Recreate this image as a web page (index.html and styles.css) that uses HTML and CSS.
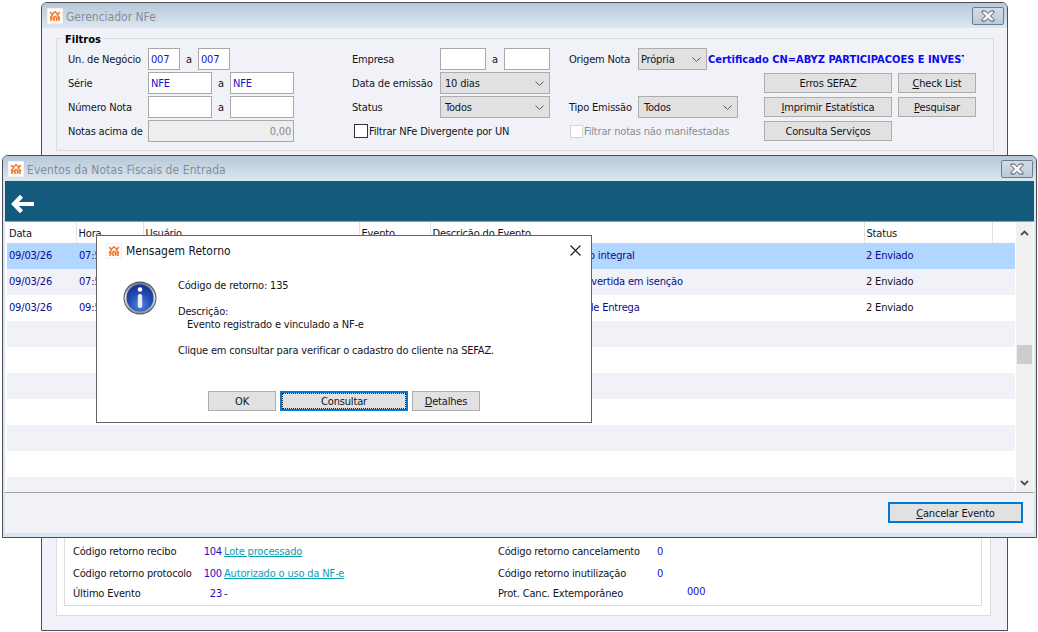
FILE: index.html
```html
<!DOCTYPE html>
<html lang="pt-BR">
<head>
<meta charset="utf-8">
<title>Gerenciador NFe</title>
<link rel="stylesheet" href="styles.css">
</head>
<body>
<svg class="defs" width="0" height="0" aria-hidden="true">
  <symbol id="logo" viewBox="0 0 16 16">
    <rect width="16" height="16" fill="#fff" stroke="#e4e4e4"/>
    <g fill="none" stroke="#f47a2c" stroke-width="1.6">
      <path d="M3 4l2.500 2.500M8 3.500L5 7M8 3.500l3.500 3.500M13 4l-3 3M3 10l2.500-3M13 10l-3-3M8 8l-3 3M8 8l3 3"/>
      <path d="M4 9v4M7 10v3M9.500 10v3M12 9v4"/>
    </g>
  </symbol>
  <symbol id="closex" viewBox="0 0 16 12">
    <path d="M2 1h3.500L8 3.600 10.500 1H14v1.500L10.600 6 14 9.500V11h-3.500L8 8.400 5.500 11H2V9.500L5.400 6 2 2.500z" fill="#f4f6f8" stroke="#50565e" stroke-width="1"/>
  </symbol>
  <symbol id="chev" viewBox="0 0 9 5">
    <path d="M.5.500l4 4 4-4" fill="none" stroke="#5a5a5a" stroke-width="1"/>
  </symbol>
</svg>

<main class="desktop">

  <section class="window win-back">
    <header class="titlebar">
      <svg class="logo"><use href="#logo"/></svg>
      <span class="title-text">Gerenciador NFe</span>
      <button class="win-close" type="button" aria-label="Fechar"><svg class="closex"><use href="#closex"/></svg></button>
    </header>
    <div class="win-body">
      <fieldset class="filtros">
        <legend class="legend">Filtros</legend>
        <div class="fcol fcol-1">
          <div class="frow"><label class="lab lab-80">Un. de Negócio</label><span class="inp w32 blue">007</span><span class="a a18">a</span><span class="inp w32 blue">007</span></div>
          <div class="frow"><label class="lab lab-80">Série</label><span class="inp w64 blue">NFE</span><span class="a a18">a</span><span class="inp w64 blue">NFE</span></div>
          <div class="frow"><label class="lab lab-80">Número Nota</label><span class="inp w64"></span><span class="a a18">a</span><span class="inp w64"></span></div>
          <div class="frow"><label class="lab lab-80">Notas acima de</label><span class="inp w146 dis">0,00</span></div>
        </div>
        <div class="fcol fcol-2">
          <div class="frow"><label class="lab lab-88">Empresa</label><span class="inp w46"></span><span class="a a18">a</span><span class="inp w46"></span></div>
          <div class="frow"><label class="lab lab-88">Data de emissão</label><span class="sel w110">10 dias<svg class="chev"><use href="#chev"/></svg></span></div>
          <div class="frow"><label class="lab lab-88">Status</label><span class="sel w110">Todos<svg class="chev"><use href="#chev"/></svg></span></div>
          <div class="frow chk-row"><span class="chk"></span><span class="chk-text">Filtrar NFe Divergente por UN</span></div>
        </div>
        <div class="fcol fcol-3">
          <div class="frow"><label class="lab lab-69">Origem Nota</label><span class="sel w69">Própria<svg class="chev"><use href="#chev"/></svg></span><span class="cert">Certificado CN=ABYZ PARTICIPACOES E INVESTIMENTOS</span></div>
          <div class="frow"><span class="spacer-195"></span><button class="btn w128" type="button">Erros SEFAZ</button><button class="btn w78" type="button"><u>C</u>heck List</button></div>
          <div class="frow"><label class="lab lab-69">Tipo Emissão</label><span class="sel w100">Todos<svg class="chev"><use href="#chev"/></svg></span><span class="spacer-26"></span><button class="btn w128" type="button"><u>I</u>mprimir Estatística</button><button class="btn w78" type="button"><u>P</u>esquisar</button></div>
          <div class="frow"><span class="chk chk-dis"></span><span class="chk-text txt-dis w182">Filtrar notas não manifestadas</span><button class="btn w128" type="button">Consulta Serviços</button></div>
        </div>
      </fieldset>

      <div class="outer-panel">
        <div class="inner-panel">
          <div class="strow h22"><span class="st-lab">Código retorno recibo</span><span class="st-val">104</span><a class="st-link">Lote processado</a><span class="st-lab2">Código retorno cancelamento</span><span class="st-val2">0</span></div>
          <div class="strow h22"><span class="st-lab">Código retorno protocolo</span><span class="st-val">100</span><a class="st-link">Autorizado o uso da NF-e</a><span class="st-lab2">Código retorno inutilização</span><span class="st-val2">0</span></div>
          <div class="strow h18"><span class="st-lab">Último Evento</span><span class="st-val">23</span><span class="st-link st-plain">-</span><span class="st-lab2">Prot. Canc. Extemporâneo</span><span class="st-val3">000</span></div>
        </div>
      </div>
    </div>
  </section>

  <section class="window win-front">
    <header class="titlebar">
      <svg class="logo"><use href="#logo"/></svg>
      <span class="title-text title-wide">Eventos da Notas Fiscais de Entrada</span>
      <button class="win-close" type="button" aria-label="Fechar"><svg class="closex"><use href="#closex"/></svg></button>
    </header>
    <div class="toolbar">
      <svg class="arrow" viewBox="0 0 23 18"><path d="M10.500 1.200L3 9l7.500 7.800M3 9h20" fill="none" stroke="#fff" stroke-width="4.200"/></svg>
    </div>
    <div class="grid-frame">
      <div class="grid-main">
        <table class="grid">
          <colgroup><col class="c1"><col class="c2"><col class="c3"><col class="c4"><col class="c5"><col class="c6"><col class="c7"></colgroup>
          <thead>
            <tr><th>Data</th><th>Hora</th><th>Usuário</th><th>Evento</th><th>Descrição do Evento</th><th>Status</th><th></th></tr>
          </thead>
          <tbody>
            <tr class="selected"><td>09/03/26</td><td class="p3">07:55:12</td><td>USUARIO</td><td>112110</td><td>Informação de efetivo pagamento integral</td><td class="st">2 Enviado</td><td></td></tr>
            <tr class="alt"><td>09/03/26</td><td class="p3">07:58:40</td><td>USUARIO</td><td>112130</td><td>Importação em ALC/ZFM não convertida em isenção</td><td class="st">2 Enviado</td><td></td></tr>
            <tr><td>09/03/26</td><td class="p3">09:52:03</td><td>USUARIO</td><td>110130</td><td>Cancelamento do Comprovante de Entrega</td><td class="st">2 Enviado</td><td></td></tr>
            <tr class="alt"><td colspan="7"></td></tr>
            <tr><td colspan="7"></td></tr>
            <tr class="alt"><td colspan="7"></td></tr>
            <tr><td colspan="7"></td></tr>
            <tr class="alt"><td colspan="7"></td></tr>
            <tr><td colspan="7"></td></tr>
            <tr class="alt"><td colspan="7"></td></tr>
          </tbody>
        </table>
      </div>
      <div class="scrollbar">
        <svg class="sb-arrow" viewBox="0 0 9 6"><path d="M1 5l3.500-3.500L8 5" fill="none" stroke="#505050" stroke-width="1.800"/></svg>
        <div class="sb-thumb"></div>
        <svg class="sb-arrow" viewBox="0 0 9 6"><path d="M1 1l3.500 3.500L8 1" fill="none" stroke="#505050" stroke-width="1.800"/></svg>
      </div>
    </div>
    <footer class="win-foot">
      <button class="btn btn-default" type="button"><u>C</u>ancelar Evento</button>
    </footer>
  </section>

  <section class="dialog">
    <header class="dlg-title">
      <svg class="logo"><use href="#logo"/></svg>
      <span class="dlg-title-text">Mensagem Retorno</span>
      <svg class="dlg-x" viewBox="0 0 11 11"><path d="M.5.500l10 10M10.500.500l-10 10" stroke="#1a1a1a" stroke-width="1.100" fill="none"/></svg>
    </header>
    <div class="dlg-body">
      <svg class="info" viewBox="0 0 34 34">
        <defs>
          <radialGradient id="ig" cx="50%" cy="75%" r="75%"><stop offset="0" stop-color="#4f86e0"/><stop offset="0.6" stop-color="#2148ae"/><stop offset="1" stop-color="#16318a"/></radialGradient>
          <linearGradient id="ir" x1="0" y1="0" x2="0" y2="1"><stop offset="0" stop-color="#6e7686"/><stop offset="0.5" stop-color="#dfe3ea"/><stop offset="1" stop-color="#8b92a0"/></linearGradient>
        </defs>
        <circle cx="17" cy="17" r="16.500" fill="#4a5060"/>
        <circle cx="17" cy="17" r="15.500" fill="url(#ir)"/>
        <circle cx="17" cy="17" r="13.500" fill="url(#ig)"/>
        <circle cx="17" cy="8.500" r="2.300" fill="#fff"/>
        <rect x="14.800" y="13" width="4.400" height="14" rx="2" fill="#e8ecf2"/>
      </svg>
      <div class="dlg-msg">
        <p class="m1">Código de retorno: 135</p>
        <p class="m2">Descrição:</p>
        <p class="m3">Evento registrado e vinculado a NF-e</p>
        <p class="m4">Clique em consultar para verificar o cadastro do cliente na SEFAZ.</p>
      </div>
    </div>
    <div class="dlg-btns">
      <button class="btn w68" type="button">OK</button>
      <button class="btn btn-focus" type="button"><span class="focus-in">Consultar</span></button>
      <button class="btn w68" type="button"><u>D</u>etalhes</button>
    </div>
  </section>

</main>
</body>
</html>
```

FILE: styles.css
```css
* { box-sizing: border-box; }
html, body { margin: 0; padding: 0; background: #fff; }
body {
  font-family: "DejaVu Sans Condensed", "DejaVu Sans", sans-serif;
  font-stretch: condensed;
  font-size: 11px;
  letter-spacing: -0.18px;
  color: #14141e;
  width: 1038px;
  height: 632px;
  overflow: hidden;
}
.defs { position: absolute; }
.desktop { position: relative; width: 1038px; height: 632px; overflow: hidden; }

/* Windows on the desktop */
.window {
  position: absolute;
  display: flex;
  flex-direction: column;
  border: 1px solid #4c5056;
  border-radius: 6px 6px 0 0;
  background: #f0f2f8;
}
.win-back { left: 41px; top: 2px; width: 967px; height: 629px; }
.win-front { left: 2px; top: 155px; width: 1035px; height: 383px; padding: 0 2px 2px; background: #d9e4ee; }

.titlebar {
  flex: none;
  height: 25px;
  display: flex;
  align-items: center;
  padding: 0 3px 0 5px;
  background: linear-gradient(#b8c8d8, #dbe7f2);
  border-radius: 5px 5px 0 0;
}
.win-front .titlebar { margin: 0 -2px; }
.logo { width: 16px; height: 16px; flex: none; }
.title-text { margin-left: 3px; padding-top: 2px; color: #878d94; font-size: 12px; letter-spacing: 0; flex: 1; }
.title-wide { letter-spacing: 0.08px; }
.win-close {
  width: 32px;
  height: 18px;
  padding: 0;
  display: flex;
  align-items: center;
  justify-content: center;
  background: linear-gradient(#d3dde8, #bccad8);
  border: 1px solid #6d7e90;
  border-radius: 2px;
}
.closex { width: 16px; height: 12px; }

.win-body { flex: 1; display: flex; flex-direction: column; padding: 10px 13px 14px 14px; min-height: 0; }

/* Filters group */
.filtros {
  margin: 0;
  flex: none;
  height: 113px;
  min-width: 0;
  padding: 0;
  border: 1px solid #dadde2;
  background: #f0f2f8;
  position: relative;
  display: flex;
}
.legend {
  position: absolute;
  left: 5px;
  top: -6px;
  padding: 0 3px 0 3px;
  background: #f0f2f8;
  font-weight: 700;
  font-size: 11px;
  letter-spacing: 0;
  line-height: 14px;
  color: #000;
}
.fcol { display: flex; flex-direction: column; gap: 2px; padding-top: 9px; }
.fcol-1 { margin-left: 11px; width: 284px; }
.fcol-2 { width: 217px; }
.fcol-3 { flex: 1; }
.frow { display: flex; align-items: center; height: 22px; }

.lab { flex: none; white-space: nowrap; }
.lab-80 { width: 80px; }
.lab-88 { width: 88px; }
.lab-69 { width: 69px; }
.a { flex: none; text-align: center; }
.a18 { width: 18px; }

.inp {
  flex: none;
  height: 22px;
  line-height: 22px;
  padding: 0 2px;
  background: #fff;
  border: 1px solid #a9a9a9;
}
.blue { color: #1a10c8; }
.dis { background: #eeeeee; color: #8a8a8a; text-align: right; padding-right: 2px; }
.w32 { width: 32px; }
.w46 { width: 46px; }
.w64 { width: 64px; }
.w146 { width: 146px; }

.sel {
  flex: none;
  height: 22px;
  display: flex;
  align-items: center;
  justify-content: space-between;
  padding: 0 5px 0 4px;
  background: #e1e1e1;
  border: 1px solid #adadad;
}
.w110 { width: 110px; }
.w100 { width: 100px; padding-left: 5px; }
.w69 { width: 69px; padding-left: 2px; }
.chev { width: 9px; height: 5px; }

.cert {
  flex: none;
  width: 256px;
  margin-left: 1px;
  overflow: hidden;
  white-space: nowrap;
  font-weight: 700;
  letter-spacing: 0;
  color: #0a0aee;
}
.chk-row { padding-left: 2px; }
.chk { flex: none; width: 14px; height: 14px; background: #fff; border: 1px solid #333; }
.chk-dis { border-color: #d4d4d4; margin-left: 1px; width: 13px; height: 13px; }
.chk-text { margin-left: 1px; white-space: nowrap; }
.txt-dis { color: #8a8e94; }
.w182 { width: 180px; flex: none; }
.spacer-195 { flex: none; width: 195px; }
.spacer-26 { flex: none; width: 26px; }

/* Buttons */
.btn {
  flex: none;
  height: 20px;
  padding: 0;
  font: inherit;
  letter-spacing: inherit;
  color: #14141e;
  background: #e1e1e1;
  border: 1px solid #adadad;
  white-space: nowrap;
}
.w128 { width: 128px; }
.w78 { width: 78px; margin-left: 6px; }
.w68 { width: 68px; }

/* Lower status panel */
.outer-panel {
  margin-top: auto;
  margin-left: 0;
  margin-right: 3px;
  flex: none;
  height: 90px;
  padding: 0 8px 9px 7px;
  background: #fff;
  border: 1px solid #dcdcdc;
  display: flex;
}
.inner-panel {
  flex: 1;
  border: 1px solid #dcdcdc;
  padding: 0 0 3px 8px;
  display: flex;
  flex-direction: column;
  justify-content: flex-end;
}
.strow { display: flex; align-items: center; }
.h22 { height: 22px; }
.h18 { height: 18px; }
.st-lab { flex: none; width: 128px; white-space: nowrap; }
.st-val { flex: none; width: 21px; text-align: right; color: #1a10c8; }
.st-link { flex: none; width: 274px; margin-left: 2px; color: #0aa0b4; text-decoration: underline; white-space: nowrap; }
.st-plain { color: #14141e; text-decoration: none; }
.st-lab2 { flex: none; width: 159px; white-space: nowrap; }
.st-val2 { flex: none; color: #1a10c8; }
.st-val3 { flex: none; margin-left: 30px; margin-bottom: 4px; color: #1a10c8; }

/* Front window */
.toolbar { flex: none; height: 40px; background: #145a7c; display: flex; align-items: center; padding: 5px 0 0 6px; }
.arrow { width: 23px; height: 18px; }

.grid-frame {
  flex: none;
  height: 272px;
  display: flex;
  background: #fff;
  border-top: 1px solid #8ea0ad;
  border-bottom: 1px solid #a0a0a0;
  padding-right: 1px;
}
.grid-main { flex: none; width: 1011px; padding-left: 2px; overflow: hidden; height: 270px; }
.grid { table-layout: fixed; width: 1008px; border-collapse: collapse; }
.c1 { width: 69px; }
.c2 { width: 67px; }
.c3 { width: 216px; }
.c4 { width: 71px; }
.c5 { width: 434px; }
.c6 { width: 128px; }
.c7 { width: 23px; }
.grid th {
  height: 21px;
  padding: 2px 0 0 2px;
  font-weight: 400;
  text-align: left;
  background: #fff;
  color: #14141e;
  border-right: 1px solid #e2e2e2;
  white-space: nowrap;
}
.grid th:last-child { border-right: 0; }
.grid td.p3 { padding-left: 3px; }
.grid td {
  height: 26px;
  padding: 0 0 1px 2px;
  color: #0d0a8c;
  white-space: nowrap;
  overflow: hidden;
}
.grid td.st { color: #14141e; }
.grid .selected td { background: #b1d6ff; }
.grid .selected td.st { color: #0d0a8c; }
.grid .alt td { background: #f0f2f8; }

.scrollbar {
  flex: none;
  width: 17px;
  margin: 0;
  background: #f0f0f0;
  display: flex;
  flex-direction: column;
  align-items: center;
  padding: 8px 0 6px;
  position: relative;
}
.sb-arrow { width: 9px; height: 6px; flex: none; }
.sb-thumb {
  width: 15px;
  height: 19px;
  margin: 109px 0 auto;
  background: #cdcdcd;
}
.win-foot { flex: 1; display: flex; justify-content: flex-end; align-items: flex-start; background: #f0f2f8; padding: 9px 11px 0 0; border-bottom: 2px solid #d9e4ee; }
.btn-default { width: 135px; height: 21px; padding-top: 1px; border: 2px solid #0078d7; }

/* Message dialog */
.dialog {
  position: absolute;
  left: 96px;
  top: 235px;
  width: 496px;
  height: 188px;
  background: #fff;
  border: 1px solid #646464;
  display: flex;
  flex-direction: column;
}
.dlg-title { flex: none; height: 29px; display: flex; align-items: center; padding: 0 10px 0 9px; }
.dlg-title-text { flex: 1; margin-left: 4px; font-size: 12px; letter-spacing: 0; color: #14141e; }
.dlg-x { width: 11px; height: 11px; }
.dlg-body { flex: 1; display: flex; padding: 15px 0 0 26px; }
.info { flex: none; width: 34px; height: 34px; margin-top: 1px; }
.dlg-msg { margin-left: 21px; margin-top: -1px; }
.dlg-msg p { margin: 0; line-height: 13px; white-space: nowrap; }
.dlg-msg .m2 { margin-top: 13px; }
.dlg-msg .m3 { padding-left: 9px; }
.dlg-msg .m4 { margin-top: 13px; }
.dlg-btns { flex: none; display: flex; gap: 4px; padding: 0 0 11px 111px; }
.btn-focus { width: 128px; border: 2px solid #0078d7; padding: 0; }
.focus-in { display: block; height: 16px; line-height: 15px; border: 1px dotted #222; }
```
